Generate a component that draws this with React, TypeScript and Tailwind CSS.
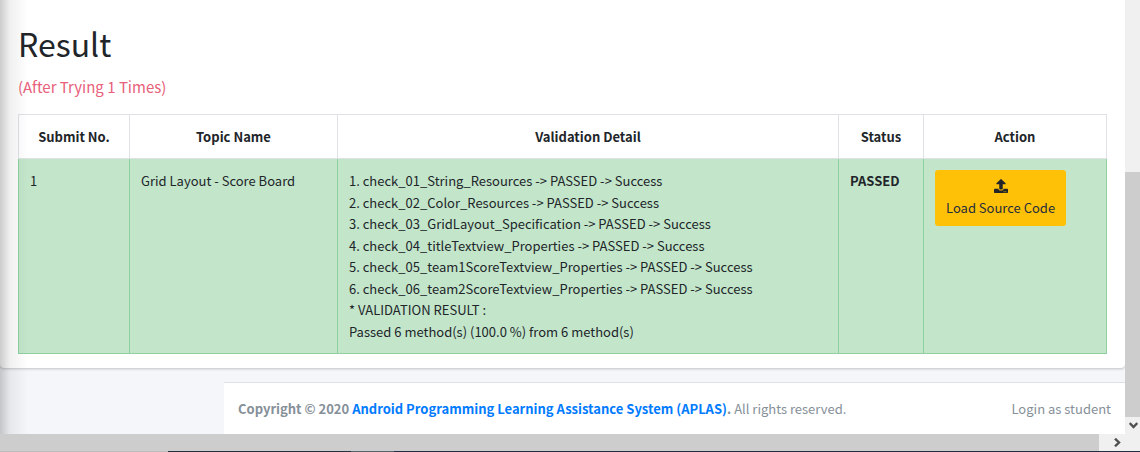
import { FaUpload } from "react-icons/fa";

const columns = ["Submit No.", "Topic Name", "Validation Detail", "Status", "Action"];

const validationLines = [
  "1. check_01_String_Resources -> PASSED -> Success",
  "2. check_02_Color_Resources -> PASSED -> Success",
  "3. check_03_GridLayout_Specification -> PASSED -> Success",
  "4. check_04_titleTextview_Properties -> PASSED -> Success",
  "5. check_05_team1ScoreTextview_Properties -> PASSED -> Success",
  "6. check_06_team2ScoreTextview_Properties -> PASSED -> Success",
  "* VALIDATION RESULT :",
  "Passed 6 method(s) (100.0 %) from 6 method(s)",
];

function ResultTable() {
  return (
    <table className="w-full table-fixed border-collapse">
      <colgroup>
        <col className="w-[111px]" />
        <col className="w-[208px]" />
        <col />
        <col className="w-[85px]" />
        <col className="w-[183px]" />
      </colgroup>
      <thead>
        <tr>
          {columns.map((name) => (
            <th key={name} scope="col" className="border border-[#dee2e6] p-[11px] text-center font-bold">
              {name}
            </th>
          ))}
        </tr>
      </thead>
      <tbody>
        <tr className="bg-[#c3e6cb] align-top">
          <td className="border border-[#8fd19e] p-[11px]">1</td>
          <td className="border border-[#8fd19e] p-[11px]">Grid Layout - Score Board</td>
          <td className="border border-[#8fd19e] p-[11px]">
            <div className="grid min-h-[172px] auto-rows-fr">
              {validationLines.map((line) => (
                <div key={line}>{line}</div>
              ))}
            </div>
          </td>
          <td className="border border-[#8fd19e] p-[11px] font-bold">PASSED</td>
          <td className="border border-[#8fd19e] p-[11px]">
            <button
              type="button"
              className="flex flex-col items-center gap-1 rounded-[3px] bg-[#ffc107] px-[11px] pt-[9px] pb-2 text-[#1f2d3d]"
            >
              <FaUpload className="size-3.5 text-[#212529]" aria-hidden="true" />
              <span>Load Source Code</span>
            </button>
          </td>
        </tr>
      </tbody>
    </table>
  );
}

function VerticalScrollbar() {
  return (
    <div className="flex w-[15px] shrink-0 flex-col bg-[#f0f0f0]">
      <div className="h-[172px]" />
      <div className="flex-1 bg-[#cdcdcd]" />
      <button type="button" aria-label="Scroll down" className="flex h-[17px] items-center justify-center">
        <svg viewBox="0 0 9 7" className="ml-0.5 h-[7px] w-[9px]" fill="none" stroke="#505050" strokeWidth="2.4">
          <path d="M0.7 1L4.5 5L8.3 1" />
        </svg>
      </button>
    </div>
  );
}

function HorizontalScrollbar() {
  return (
    <div className="flex h-[17px] bg-[#f0f0f0]">
      <div className="flex-1 bg-[#cdcdcd]" />
      <button type="button" aria-label="Scroll right" className="mr-[5px] flex w-9 items-center justify-center">
        <svg viewBox="0 0 7 9" className="h-[9px] w-[7px]" fill="none" stroke="#505050" strokeWidth="2.4">
          <path d="M1 0.7L5 4.5L1 8.3" />
        </svg>
      </button>
    </div>
  );
}

export default function App() {
  return (
    <div className="flex min-h-screen flex-col bg-[#f4f6f9] font-['Noto_Sans_CJK_SC',sans-serif] text-[13px] leading-[21px] text-[#212529]">
      <div className="flex flex-1">
        <div className="relative flex min-w-0 flex-1 flex-col overflow-hidden">
          <main className="rounded-b bg-white px-[18px] pt-[22px] pb-3.5 shadow-[0_1px_3px_rgba(0,0,0,0.2),0_0_1px_rgba(0,0,0,0.125)]">
            <h1 className="text-[32px] leading-[43px]">Result</h1>
            <p className="mt-2.5 mb-4 text-[15px] leading-[23px] text-[#e8607a]">(After Trying 1 Times)</p>
            <ResultTable />
          </main>
          <footer className="mt-3.5 ml-[224px] flex flex-1 items-center justify-between border-t border-[#dee2e6] bg-white p-3.5 text-[#869099]">
            <div>
              <strong className="font-bold">
                Copyright © 2020{" "}
                <a href="#" className="text-[#007bff]">
                  Android Programming Learning Assistance System (APLAS)
                </a>
                .
              </strong>{" "}
              All rights reserved.
            </div>
            <div>Login as student</div>
          </footer>
          <div className="pointer-events-none absolute inset-y-0 left-0 w-7 bg-linear-to-r from-black/20 via-black/6 via-35% to-transparent" />
        </div>
        <VerticalScrollbar />
      </div>
      <HorizontalScrollbar />
      <div className="flex h-px bg-[#222c44]">
        <div className="w-[168px] bg-[#bdbdbd]" />
        <div className="w-[183px] bg-[#22333b]" />
        <div className="w-[43px] bg-[#55636b]" />
      </div>
    </div>
  );
}
